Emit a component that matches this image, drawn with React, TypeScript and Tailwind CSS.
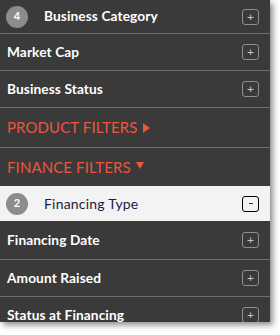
import { ReactNode } from "react";

function PlusBox({ open }: { open?: boolean }) {
  if (open) {
    return (
      <div className="w-[17px] h-[16px] rounded-[3px] border border-black flex items-center justify-center">
        <div className="w-[4px] h-[1.5px] bg-[#333]"></div>
      </div>
    );
  }
  return (
    <div className="w-[17px] h-[16px] rounded-[3px] border border-[#8e8e8e] flex items-center justify-center text-[#c8c8c8] text-[12px] leading-none">
      +
    </div>
  );
}

function Badge({ n }: { n: number }) {
  return (
    <div className="w-[22px] h-[22px] rounded-full bg-[#8c8c8c] flex items-center justify-center text-white text-[11px] font-bold">
      {n}
    </div>
  );
}

function Row({
  children,
  h,
  border = true,
  badge,
  open,
}: {
  children: ReactNode;
  h: string;
  border?: boolean;
  badge?: number;
  open?: boolean;
}) {
  return (
    <div
      className={`${h} flex items-center justify-between pl-[7px] pr-[11px] ${
        border ? "border-b border-[#6e6e6e]" : ""
      } ${open ? "bg-[#f3f3f3]" : ""}`}
    >
      <div className="flex items-center">
        {badge !== undefined && (
          <div className="ml-[-1px] mr-[16px]">
            <Badge n={badge} />
          </div>
        )}
        {children}
      </div>
      <PlusBox open={open} />
    </div>
  );
}

export default function App() {
  const label = "text-white text-[13.7px] font-bold tracking-[0.1px]";
  return (
    <div className="w-[280px] h-[335px] bg-white" style={{ fontFamily: "Lato, 'Open Sans', sans-serif" }}>
      <div className="w-[270px] h-[322px] overflow-hidden bg-[#3a3a3a] shadow-[3px_3px_6px_rgba(0,0,0,0.45)]">
        <Row h="h-[34px]" badge={4}>
          <span className={label}>Business Category</span>
        </Row>
        <Row h="h-[37px]">
          <span className={label}>Market Cap</span>
        </Row>
        <Row h="h-[37px]">
          <span className={label}>Business Status</span>
        </Row>

        <div className="h-[40px] border-b border-[#6e6e6e] flex items-center pl-[7px] text-[#ee553c] text-[15px] tracking-[0.1px]">
          PRODUCT FILTERS
          <span className="ml-[5px] w-0 h-0 border-y-[5px] border-y-transparent border-l-[7px] border-l-[#ee553c]"></span>
        </div>
        <div className="h-[38px] flex items-center pl-[7px] text-[#ee553c] text-[15px] tracking-[0.1px]">
          FINANCE FILTERS
          <span className="ml-[5px] mb-[3px] w-0 h-0 border-x-[4px] border-x-transparent border-t-[7px] border-t-[#ee553c]"></span>
        </div>

        <Row h="h-[35px]" border={false} badge={2} open>
          <span className="text-[#1c1c3c] text-[14px] tracking-[0.2px]">Financing Type</span>
        </Row>
        <Row h="h-[39px]">
          <span className={label}>Financing Date</span>
        </Row>
        <Row h="h-[37px]">
          <span className={label}>Amount Raised</span>
        </Row>
        <Row h="h-[37px]">
          <span className={label}>Status at Financing</span>
        </Row>
      </div>
    </div>
  );
}
